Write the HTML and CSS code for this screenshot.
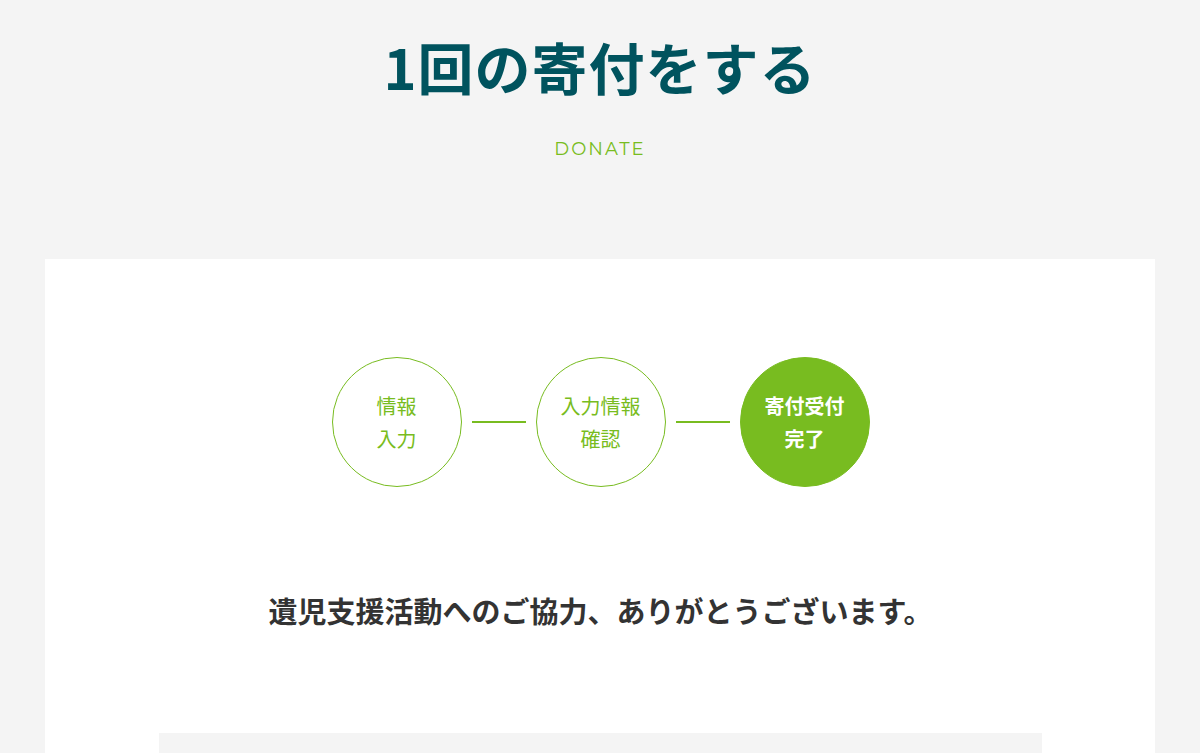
FILE: index.html
```html
<!DOCTYPE html>
<html lang="ja">
<head>
<meta charset="utf-8">
<title>1回の寄付をする</title>
<link rel="stylesheet" href="styles.css">
</head>
<body>
<header class="page-head">
  <h1 class="page-title">1回の寄付をする</h1>
  <p class="page-sub">DONATE</p>
</header>
<main class="card">
  <ol class="steps">
    <li class="step">情報<br>入力</li>
    <li class="step-line" aria-hidden="true"></li>
    <li class="step">入力情報<br>確認</li>
    <li class="step-line" aria-hidden="true"></li>
    <li class="step step-current">寄付受付<br>完了</li>
  </ol>
  <p class="thanks">遺児支援活動へのご協力、ありがとうございます。</p>
  <div class="info-box"></div>
</main>
</body>
</html>
```

FILE: styles.css
```css
html, body {
  margin: 0;
  padding: 0;
  background: #f4f4f4;
  font-family: "Noto Sans CJK JP", "Noto Sans", sans-serif;
  color: #333;
}

.page-head {
  text-align: center;
  padding-top: 32px;
}

.page-title {
  margin: 0;
  font-size: 56px;
  line-height: 68px;
  font-weight: 700;
  color: #00535e;
  letter-spacing: 1px;
}

.page-sub {
  margin: 37px 0 0;
  font-family: "Montserrat", "Lato", "Noto Sans", sans-serif;
  font-size: 18px;
  line-height: 24px;
  letter-spacing: 2px;
  color: #78bc20;
}

.card {
  max-width: 1110px;
  margin: 98px auto 0;
  background: #fff;
  padding: 98px 113px 40px 114px;
  box-sizing: border-box;
}

.steps {
  list-style: none;
  margin: 0;
  padding: 0;
  display: flex;
  justify-content: center;
  align-items: center;
  gap: 10px;
}

.step {
  width: 130px;
  height: 130px;
  box-sizing: border-box;
  border: 1px solid #78bc20;
  border-radius: 50%;
  display: flex;
  align-items: center;
  justify-content: center;
  text-align: center;
  color: #78bc20;
  font-size: 20px;
  line-height: 33px;
}

.step-current {
  background: #78bc20;
  color: #fff;
  font-weight: 700;
}

.step-line {
  width: 54px;
  height: 2px;
  background: #78bc20;
}

.thanks {
  margin: 103px 0 0;
  text-align: center;
  font-size: 29px;
  line-height: 40px;
  font-weight: 700;
  color: #333;
}

.info-box {
  margin-top: 103px;
  height: 120px;
  background: #f4f4f4;
}
```
